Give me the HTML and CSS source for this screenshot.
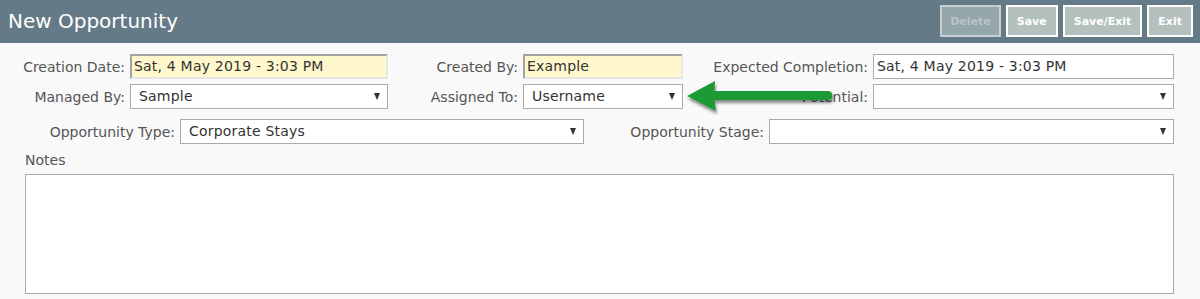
FILE: index.html
```html
<!DOCTYPE html>
<html>
<head>
<meta charset="utf-8">
<link rel="stylesheet" href="styles.css">
</head>
<body>
<div class="header">
  <div class="title">New Opportunity</div>
  <div class="actions">
    <button class="btn disabled">Delete</button>
    <button class="btn">Save</button>
    <button class="btn">Save/Exit</button>
    <button class="btn">Exit</button>
  </div>
</div>
<div class="form">
  <div class="grid3">
    <label class="lbl">Creation Date:</label>
    <div class="field ro">Sat, 4 May 2019 - 3:03 PM</div>
    <label class="lbl">Created By:</label>
    <div class="field ro">Example</div>
    <label class="lbl">Expected Completion:</label>
    <div class="field txt">Sat, 4 May 2019 - 3:03 PM</div>

    <label class="lbl">Managed By:</label>
    <div class="field sel"><span>Sample</span><i class="caret"></i></div>
    <label class="lbl">Assigned To:</label>
    <div class="field sel"><span>Username</span><i class="caret"></i></div>
    <label class="lbl">Potential:</label>
    <div class="field sel"><span></span><i class="caret"></i></div>
  </div>
  <div class="grid2">
    <label class="lbl">Opportunity Type:</label>
    <div class="field sel"><span>Corporate Stays</span><i class="caret"></i></div>
    <label class="lbl">Opportunity Stage:</label>
    <div class="field sel"><span></span><i class="caret"></i></div>
  </div>
  <div class="notes-lbl">Notes</div>
  <div class="notes"></div>
  <svg class="arrow" width="170" height="50" viewBox="0 0 170 50">
    <defs>
      <filter id="sh" x="-20%" y="-40%" width="140%" height="180%">
        <feDropShadow dx="1" dy="3" stdDeviation="1.8" flood-color="#000" flood-opacity="0.45"/>
      </filter>
    </defs>
    <path d="M7,21 L35,6 L34.5,16 L148,16 A4.5,4.5 0 0 1 148,25 L34.5,25 L36,36 Z" fill="#1f9a35" filter="url(#sh)"/>
  </svg>
</div>
</body>
</html>
```
FILE: styles.css
```css
html, body {
  margin: 0;
  padding: 0;
  background: #f9f9f9;
  font-family: "DejaVu Sans", Verdana, sans-serif;
}
.header {
  height: 43px;
  background: #657a87;
  display: flex;
  justify-content: space-between;
  align-items: flex-start;
  padding: 0 7px 0 8px;
}
.title {
  color: #fff;
  font-size: 20px;
  line-height: 43px;
}
.actions {
  display: flex;
  gap: 5px;
  margin-top: 5px;
}
.btn {
  height: 32px;
  box-sizing: border-box;
  border: 2px solid #fff;
  background: #b4c0be;
  color: #fff;
  font-family: "DejaVu Sans", Verdana, sans-serif;
  font-weight: bold;
  font-size: 11px;
  padding: 0 9px;
  margin: 0;
}
.btn.disabled {
  background: #95a6ad;
  border-color: #c6d0d3;
  color: #b8c4c8;
  padding: 0 8px;
}
.btn.wide {
  padding: 0 10px;
}
.form {
  position: relative;
  padding: 11px 26px 0 25px;
}
.grid3 {
  display: grid;
  grid-template-columns: 105px 258px 135px 160px 190px 1fr;
  grid-auto-rows: 25px;
  row-gap: 5px;
}
.grid2 {
  display: grid;
  grid-template-columns: 155px 404px 185px 1fr;
  grid-auto-rows: 25px;
  margin-top: 10px;
}
.lbl {
  display: flex;
  justify-content: flex-end;
  align-items: center;
  font-size: 14px;
  color: #555;
  padding-right: 5px;
  white-space: nowrap;
  min-width: 0;
}
.field {
  box-sizing: border-box;
  height: 25px;
  font-size: 14px;
  letter-spacing: 0.2px;
  color: #333;
  line-height: 21px;
  padding: 0 6px;
  background: #fff;
  border: 1px solid #aaa;
  white-space: nowrap;
  overflow: hidden;
}
.field.ro {
  background: #fff8cc;
  border-width: 2px;
  border-color: #a3a3a3 #e6e6e6 #e6e6e6 #a3a3a3;
  padding: 0 2px;
  line-height: 21px;
}
.field.txt {
  padding: 0 3px;
  line-height: 23px;
}
.field.sel {
  display: flex;
  align-items: center;
  justify-content: space-between;
  padding: 0 7px 0 8px;
}
.caret {
  width: 0;
  height: 0;
  border-left: 3px solid transparent;
  border-right: 3px solid transparent;
  border-top: 7px solid #333;
}
.notes-lbl {
  font-size: 14px;
  color: #555;
  margin-top: 8px;
  line-height: 17px;
}
.notes {
  box-sizing: border-box;
  height: 120px;
  margin-top: 5px;
  background: #fff;
  border: 1px solid #aaa;
}
.arrow {
  position: absolute;
  left: 680px;
  top: 32px;
}
```
